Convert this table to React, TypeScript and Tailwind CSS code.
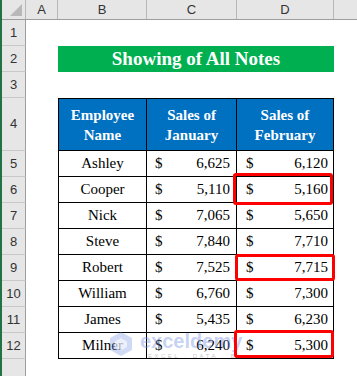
import React from "react";

const data: [string, string, string][] = [
  ["Ashley", "6,625", "6,120"],
  ["Cooper", "5,110", "5,160"],
  ["Nick", "7,065", "5,650"],
  ["Steve", "7,840", "7,710"],
  ["Robert", "7,525", "7,715"],
  ["William", "6,760", "7,300"],
  ["James", "5,435", "6,230"],
  ["Milner", "6,240", "5,300"],
];

const serif = { fontFamily: '"Liberation Serif", "Times New Roman", serif' };
const sans = { fontFamily: '"Liberation Sans", Arial, sans-serif' };

function RowHead({ n, h }: { n?: number; h: string }) {
  return (
    <div
      className={`w-[24px] shrink-0 ${h} bg-[#e6e6e6] border-r border-b border-r-[#9e9e9e] border-b-[#c8c8c8] flex items-center justify-center text-[13px] text-[#333333]`}
      style={sans}
    >
      {n}
    </div>
  );
}

export default function App() {
  return (
    <div className="relative w-[357px] h-[376px] overflow-hidden bg-white border-l-2 border-[#217346]">
      {/* column headers */}
      <div className="flex h-[20px] bg-[#e6e6e6] border-b border-[#9e9e9e] text-[13px] text-[#333333]" style={sans}>
        <div className="w-[24px] shrink-0 border-r border-[#b8b8b8] relative">
          <div className="absolute right-[3px] bottom-[3px] w-0 h-0 border-l-[12px] border-l-transparent border-b-[12px] border-b-[#b8b8b8]" />
        </div>
        <div className="w-[32px] shrink-0 border-r border-[#b8b8b8] flex items-center justify-center">A</div>
        <div className="w-[89px] shrink-0 border-r border-[#b8b8b8] flex items-center justify-center">B</div>
        <div className="w-[90px] shrink-0 border-r border-[#b8b8b8] flex items-center justify-center">C</div>
        <div className="w-[97px] shrink-0 border-r border-[#b8b8b8] flex items-center justify-center">D</div>
        <div className="flex-1" />
      </div>

      {/* row 1 */}
      <div className="flex">
        <RowHead n={1} h="h-[26px]" />
      </div>
      {/* row 2 */}
      <div className="flex">
        <RowHead n={2} h="h-[26px]" />
        <div className="w-[32px] shrink-0" />
        <div
          className="w-[276px] h-[26px] bg-[#00b050] flex items-center justify-center text-white font-bold text-[19px]"
          style={serif}
        >
          Showing of All Notes
        </div>
      </div>
      {/* row 3 */}
      <div className="flex">
        <RowHead n={3} h="h-[26px]" />
      </div>
      {/* row 4 header */}
      <div className="flex">
        <RowHead n={4} h="h-[53px]" />
        <div className="w-[32px] shrink-0" />
        <div className="flex text-white font-bold text-[15px] leading-[20px] text-center" style={serif}>
          <div className="w-[89px] h-[53px] bg-[#0070c0] border border-black flex items-center justify-center">
            Employee
            <br />
            Name
          </div>
          <div className="w-[90px] h-[53px] bg-[#0070c0] border-y border-r border-black flex items-center justify-center">
            Sales of
            <br />
            January
          </div>
          <div className="w-[97px] h-[53px] bg-[#0070c0] border-y border-r border-black flex items-center justify-center">
            Sales of
            <br />
            February
          </div>
        </div>
      </div>
      {data.map(([name, jan, feb], i) => (
        <div className="flex" key={name}>
          <RowHead n={i + 5} h="h-[26px]" />
          <div className="w-[32px] shrink-0" />
          <div className="flex text-[15px] text-black" style={serif}>
            <div className="w-[89px] h-[26px] border-x border-b border-black flex items-center justify-center">
              {name}
            </div>
            <div className="w-[90px] h-[26px] border-r border-b border-black flex items-center justify-between pl-[8px] pr-[6px]">
              <span>$</span>
              <span>{jan}</span>
            </div>
            <div className="w-[97px] h-[26px] border-r border-b border-black flex items-center justify-between pl-[9px] pr-[5px]">
              <span>$</span>
              <span>{feb}</span>
            </div>
          </div>
        </div>
      ))}
      {/* row 13 (partially visible, label out of view) */}
      <div className="flex">
        <RowHead h="h-[26px]" />
      </div>

      {/* watermark */}
      <div className="absolute left-[105px] top-[330px] flex items-start gap-[5px] pointer-events-none">
        <svg width="28" height="28" viewBox="0 0 28 28">
          <path d="M14 2 L25 8 L25 20 L14 26 L3 20 L3 8 Z" fill="rgba(120,150,225,0.35)" />
          <path d="M14 8 L20 11.5 L20 17 L14 20.5 L8 17 L8 11.5 Z" fill="rgba(255,255,255,0.6)" />
        </svg>
        <div className="flex flex-col leading-none pt-[1px]">
          <span className="text-[20px] font-bold text-[rgba(110,140,225,0.4)]" style={sans}>
            exceldemy
          </span>
          <span className="text-[6px] tracking-[2.5px] text-[rgba(140,140,140,0.5)] mt-[2px] ml-[8px]" style={sans}>
            EXCEL · DATA · BI
          </span>
        </div>
      </div>

      {/* red highlight boxes */}
      <div className="absolute left-[231px] top-[173px] w-[100px] h-[32px] border-[3px] border-[#ff0000] rounded-[3px]" />
      <div className="absolute left-[233px] top-[254px] w-[100px] h-[27px] border-[3px] border-[#ff0000] rounded-[3px]" />
      <div className="absolute left-[232px] top-[330px] w-[100px] h-[28px] border-[3px] border-[#ff0000] rounded-[3px]" />
    </div>
  );
}
